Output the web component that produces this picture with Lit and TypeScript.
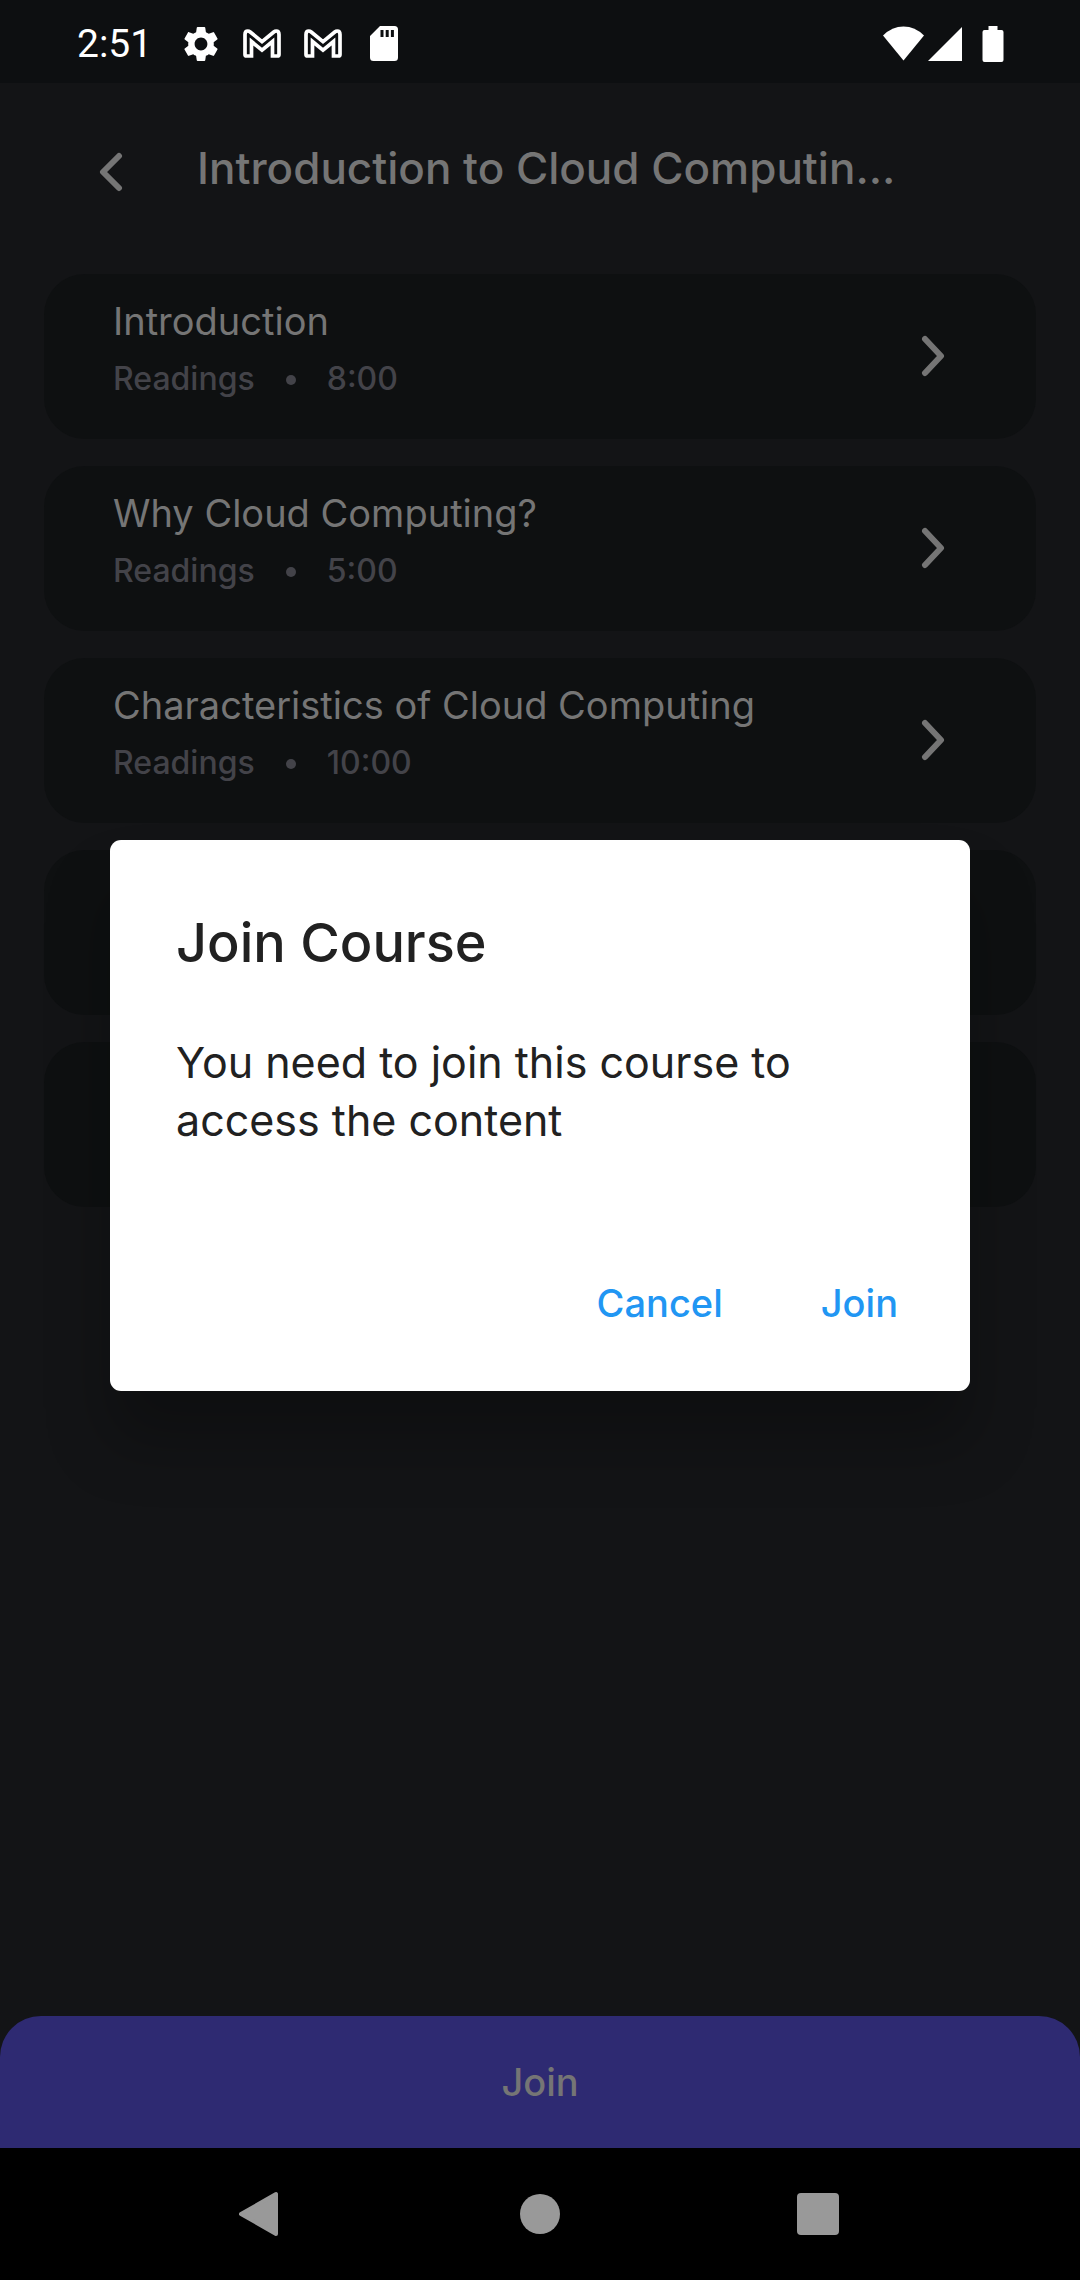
import { LitElement, html, css, svg } from "lit";
import { customElement } from "lit/decorators.js";

interface Lesson {
  title: string;
  kind: string;
  time: string;
}

const LESSONS: Lesson[] = [
  { title: "Introduction", kind: "Readings", time: "8:00" },
  { title: "Why Cloud Computing?", kind: "Readings", time: "5:00" },
  { title: "Characteristics of Cloud Computing", kind: "Readings", time: "10:00" },
];

const gmail = svg`<path d="M2 25.5V5.5Q2 2 4.8 2Q6 2 7.2 3L19 12.6 30.8 3Q32 2 33.2 2Q36 2 36 5.500V25.500Q36 27 34.500 27H29.500V12.500L19 21.200 8.500 12.500V27H3.500Q2 27 2 25.500Z" fill="none" stroke="#fff" stroke-width="3.700" stroke-linejoin="miter"/>`;

@customElement("status-bar")
export class StatusBar extends LitElement {
  static styles = css`
    :host {
      display: flex;
      align-items: center;
      justify-content: space-between;
      height: 83px;
      padding: 4px 76px 0 77px;
      box-sizing: border-box;
      background: #0d0f11;
      color: #fff;
      font: 400 39px/46px Roboto, sans-serif;
    }
    .left,
    .right,
    .notes {
      display: flex;
      align-items: center;
    }
    .left {
      gap: 30px;
    }
    .notes {
      gap: 23px;
    }
    .radio {
      display: flex;
      gap: 4px;
    }
    .right {
      gap: 20px;
    }
    svg {
      display: block;
    }
  `;

  render() {
    return html`
      <div class="left">
        <span>2:51</span>
        <div class="notes">
          <svg width="38" height="38" viewBox="1.3 1.3 21.4 21.4" fill="#fff" aria-hidden="true">
            <path d="M19.14 12.94c.04-.3.06-.61.06-.94 0-.32-.02-.64-.07-.94l2.03-1.58a.49.49 0 0 0 .12-.61l-1.92-3.32a.488.488 0 0 0-.59-.22l-2.39.96c-.5-.38-1.03-.7-1.62-.94l-.36-2.54a.484.484 0 0 0-.48-.41h-3.84c-.24 0-.43.17-.47.41l-.36 2.54c-.59.24-1.13.57-1.62.94l-2.39-.96c-.22-.08-.47 0-.59.22L2.74 8.87c-.12.21-.08.47.12.61l2.03 1.58c-.05.3-.09.63-.09.94s.02.64.07.94l-2.03 1.58a.49.49 0 0 0-.12.61l1.92 3.32c.12.22.37.29.59.22l2.39-.96c.5.38 1.03.7 1.62.94l.36 2.54c.05.24.24.41.48.41h3.84c.24 0 .44-.17.47-.41l.36-2.54c.59-.24 1.13-.56 1.62-.94l2.39.96c.22.08.47 0 .59-.22l1.92-3.32c.12-.22.07-.47-.12-.61l-2.01-1.58zM12 15.6c-1.98 0-3.6-1.62-3.6-3.6s1.62-3.6 3.6-3.6 3.6 1.62 3.6 3.6-1.62 3.6-3.6 3.6z"/>
          </svg>
          <svg width="38" height="29" viewBox="0 0 38 29" aria-hidden="true">${gmail}</svg>
          <svg width="38" height="29" viewBox="0 0 38 29" aria-hidden="true">${gmail}</svg>
          <svg width="38" height="35" viewBox="0 0 38 35" aria-hidden="true">
            <path fill="#fff" fill-rule="evenodd" d="M15 0H29.5Q33 0 33 3.5V31.500Q33 35 29.500 35H8.500Q5 35 5 31.500V10ZM15.500 4V11H18.500V4ZM20.700 4V11H23.700V4ZM25.900 4V11H28.900V4Z"/>
          </svg>
        </div>
      </div>
      <div class="right">
        <div class="radio">
          <svg width="41" height="36" viewBox="0 0 41 36" fill="#fff" aria-hidden="true">
            <path d="M0 9.500Q9 0.500 20.500 0.500T41 9.500L20.500 34.500Z"/>
          </svg>
          <svg width="34" height="36" viewBox="0 0 34 36" fill="#fff" aria-hidden="true">
            <path d="M34 1V35H0Z"/>
          </svg>
        </div>
        <svg width="22" height="36" viewBox="0 0 22 36" fill="#fff" aria-hidden="true">
          <path d="M6.500 0H15.500V4H19.500Q21.500 4 21.500 6V34Q21.500 36 19.500 36H2.500Q0.500 36 0.500 34V6Q0.500 4 2.500 4H6.500Z"/>
        </svg>
      </div>
    `;
  }
}

@customElement("lesson-card")
export class LessonCard extends LitElement {
  static properties = { lesson: { attribute: false } };
  declare lesson?: Lesson;

  static styles = css`
    :host {
      display: block;
    }
    .card {
      display: flex;
      align-items: center;
      justify-content: space-between;
      width: 100%;
      height: 165px;
      padding: 0 90px 2px 69px;
      box-sizing: border-box;
      border: 0;
      border-radius: 41px;
      background: #0e1011;
      text-align: left;
      font-family: Inter, sans-serif;
    }
    .text {
      display: flex;
      flex-direction: column;
      gap: 10px;
      padding-bottom: 16px;
    }
    .title {
      color: #757575;
      font-size: 38px;
      line-height: 52px;
    }
    .meta {
      display: flex;
      align-items: center;
      color: #434349;
      font-size: 32px;
      font-weight: 500;
      line-height: 44px;
    }
    .dot {
      width: 10px;
      height: 10px;
      margin: 2px 31px 0;
      border-radius: 50%;
      background: #434349;
    }
    svg {
      display: block;
    }
  `;

  render() {
    const l = this.lesson;
    return html`
      <button class="card" aria-label=${l ? l.title : "Lesson"}>
        ${l
          ? html`
              <span class="text">
                <span class="title">${l.title}</span>
                <span class="meta"
                  ><span>${l.kind}</span><span class="dot"></span><span>${l.time}</span></span
                >
              </span>
              <svg width="30" height="42" viewBox="0 0 30 42" aria-hidden="true">
                <path d="M9 4 25 21 9 38" fill="none" stroke="#757575" stroke-width="6" stroke-linecap="round" stroke-linejoin="round"/>
              </svg>
            `
          : ""}
      </button>
    `;
  }
}

@customElement("join-dialog")
export class JoinDialog extends LitElement {
  static styles = css`
    :host {
      display: flex;
      flex-direction: column;
      padding: 67px 66px 41px;
      box-sizing: border-box;
      border-radius: 11px;
      background: #fff;
      color: #212121;
      font-family: Inter, sans-serif;
      box-shadow: 0 50px 64px 0 rgba(0, 0, 0, 0.26);
    }
    h2 {
      margin: 0;
      font-size: 54px;
      font-weight: 500;
      line-height: 72px;
    }
    p {
      margin: 54px 0 0;
      font-size: 43px;
      line-height: 58px;
    }
    .actions {
      display: flex;
      justify-content: flex-end;
      gap: 54px;
      margin: 107px -16px 0 0;
    }
    button {
      padding: 22px;
      border: 0;
      background: none;
      color: #2196f3;
      font: 500 38px/50px Inter, sans-serif;
    }
  `;

  render() {
    return html`
      <h2>Join Course</h2>
      <p>You need to join this course to access the content</p>
      <div class="actions">
        <button>Cancel</button>
        <button>Join</button>
      </div>
    `;
  }
}

@customElement("app-root")
export class AppRoot extends LitElement {
  static styles = css`
    :host {
      display: flex;
      flex-direction: column;
      min-height: 100vh;
      background: #131416;
      font-family: Inter, sans-serif;
    }
    .screen {
      position: relative;
      flex: 1;
      display: flex;
      flex-direction: column;
    }
    header {
      display: flex;
      align-items: center;
      gap: 71px;
      height: 191px;
      padding: 0 96px 14px 92px;
      box-sizing: border-box;
    }
    .back {
      display: flex;
      padding: 0;
      border: 0;
      background: none;
    }
    h1 {
      margin: 0 0 7px;
      color: #757575;
      font-size: 44px;
      font-weight: 500;
      line-height: 58px;
    }
    .list {
      flex: 1;
      display: flex;
      flex-direction: column;
      gap: 27px;
      padding: 0 44px;
    }
    .join {
      height: 132px;
      border: 0;
      border-radius: 41px 41px 0 0;
      background: #2e2a72;
      color: #757575;
      font: 500 38px/50px Inter, sans-serif;
    }
    .modal {
      position: absolute;
      inset: 0;
      display: flex;
      flex-direction: column;
      justify-content: center;
      padding: 0 110px;
    }
    .nav {
      display: grid;
      grid-template-columns: 1fr 1fr 1fr;
      align-items: center;
      justify-items: center;
      height: 132px;
      padding: 0 123px;
      background: #000;
    }
    .nav button {
      display: flex;
      padding: 0;
      border: 0;
      background: none;
    }
  `;

  render() {
    return html`
      <status-bar></status-bar>
      <div class="screen">
        <header>
          <button class="back" aria-label="Back">
            <svg width="34" height="40" viewBox="0 0 34 40" aria-hidden="true">
              <path d="M27 4 11 20 27 36" fill="none" stroke="#757575" stroke-width="6" stroke-linecap="round" stroke-linejoin="round"/>
            </svg>
          </button>
          <h1>Introduction to Cloud Computin...</h1>
        </header>
        <div class="list">
          ${LESSONS.map((l) => html`<lesson-card .lesson=${l}></lesson-card>`)}
          <lesson-card></lesson-card>
          <lesson-card></lesson-card>
        </div>
        <button class="join">Join</button>
        <div class="modal"><join-dialog role="dialog" aria-modal="true" aria-label="Join Course"></join-dialog></div>
      </div>
      <div class="nav">
        <button aria-label="Back">
          <svg width="46" height="46" viewBox="0 0 46 46" aria-hidden="true">
            <path d="M37 3V43L2 23Z" fill="#999" stroke="#999" stroke-width="4" stroke-linejoin="round"/>
          </svg>
        </button>
        <button aria-label="Home">
          <svg width="42" height="42" viewBox="0 0 42 42" aria-hidden="true"><circle cx="21" cy="21" r="20" fill="#999"/></svg>
        </button>
        <button aria-label="Recent apps">
          <svg width="42" height="42" viewBox="0 0 42 42" aria-hidden="true"><rect width="42" height="42" rx="4" fill="#999"/></svg>
        </button>
      </div>
    `;
  }
}
